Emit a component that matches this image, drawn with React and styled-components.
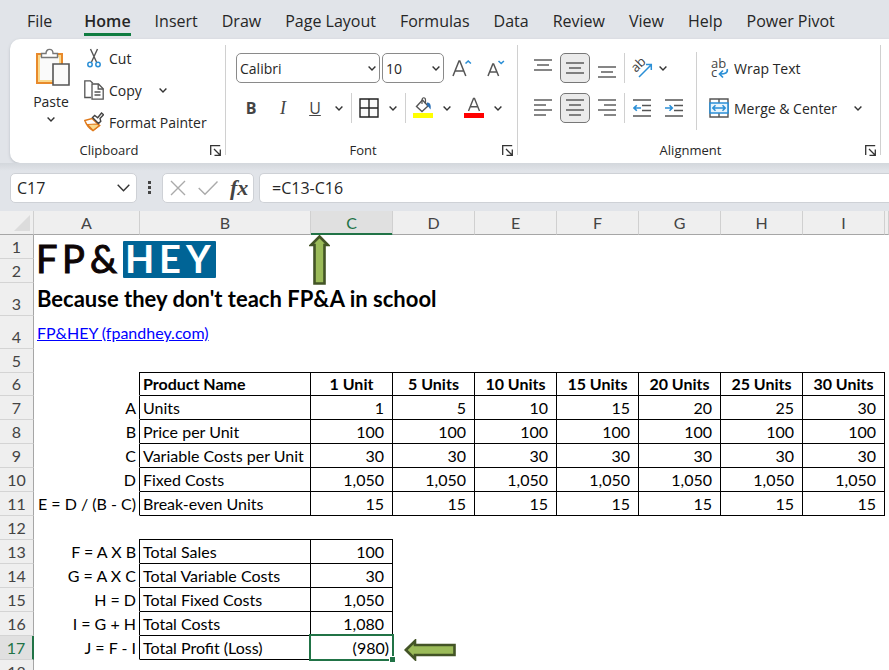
import React from 'react';
import styled, { createGlobalStyle, css } from 'styled-components';

const ui = '"Open Sans", "Noto Sans", sans-serif';
const sheet = 'Lato, "Open Sans", sans-serif';

const columns = ['A', 'B', 'C', 'D', 'E', 'F', 'G', 'H', 'I'];

const products = [
    { row: 7, key: 'A', name: 'Units', values: ['1', '5', '10', '15', '20', '25', '30'] },
    { row: 8, key: 'B', name: 'Price per Unit', values: Array(7).fill('100') },
    { row: 9, key: 'C', name: 'Variable Costs per Unit', values: Array(7).fill('30') },
    { row: 10, key: 'D', name: 'Fixed Costs', values: Array(7).fill('1,050') },
    { row: 11, key: 'E = D / (B - C)', name: 'Break-even Units', values: Array(7).fill('15') },
];

const totals = [
    { row: 13, key: 'F = A X B', name: 'Total Sales', value: '100' },
    { row: 14, key: 'G = A X C', name: 'Total Variable Costs', value: '30' },
    { row: 15, key: 'H = D', name: 'Total Fixed Costs', value: '1,050' },
    { row: 16, key: 'I = G + H', name: 'Total Costs', value: '1,080' },
    { row: 17, key: 'J = F - I', name: 'Total Profit (Loss)', value: '(980)', selected: true },
];

const unitHeads = ['1 Unit', '5 Units', '10 Units', '15 Units', '20 Units', '25 Units', '30 Units'];
const tabs = ['File', 'Home', 'Insert', 'Draw', 'Page Layout', 'Formulas', 'Data', 'Review', 'View', 'Help', 'Power Pivot'];

/* icons */

const Chevron = ({ size = 8 }) => (
    <svg width={size} height={size === 8 ? 5 : 8} viewBox={size === 8 ? '0 0 8 5' : '0 0 13 8'} fill="none" stroke="#333" strokeWidth="1.4">
        <path d={size === 8 ? 'M.6.6 4 4 7.4.6' : 'M.7.8 6.5 6.8 12.3.8'} />
    </svg>
);

const PasteIcon = () => (
    <svg width="40" height="40" viewBox="-4 0 40 40" fill="none">
        <path d="M2 6h25v29H2z" fill="#fad98d" stroke="#e8892b" strokeWidth="2" />
        <path d="M5 9h19v23H5z" fill="#fafafa" />
        <path d="M6.500 9.500V5.500h4.500c0-5.500 7-5.500 7 0h4.500v4z" fill="#fff" stroke="#777" strokeWidth="1.4" />
        <path d="M18 16h16v21H18z" fill="#fafafa" stroke="#555" strokeWidth="1.600" />
    </svg>
);

const CutIcon = () => (
    <svg width="20" height="20" viewBox="0 0 20 20" fill="none">
        <path d="M6.500 1 12.500 14M13.500 1 7.500 14" stroke="#555" strokeWidth="1.400" />
        <circle cx="6" cy="16.500" r="2.200" stroke="#2b8fd6" strokeWidth="1.500" />
        <circle cx="14" cy="16.500" r="2.200" stroke="#2b8fd6" strokeWidth="1.500" />
    </svg>
);

const CopyIcon = () => (
    <svg width="20" height="20" viewBox="0 0 20 20" fill="none" stroke="#555" strokeWidth="1.300">
        <path d="M7 17.500H.8V.8h5.500l2.500 2.500" />
        <path d="M8 4h6.500L19.200 8.700V19.200H8z" fill="#fff" />
        <path d="M14.200 4v5h5M10.500 12h6M10.500 15h6" />
    </svg>
);

const PainterIcon = () => (
    <svg width="20" height="20" viewBox="0 0 20 20" fill="none">
        <path d="M.8 8.500 8 6.500l7.500 7L9 18.500C5 16.500 2.500 13 .8 8.500z" fill="#fff" stroke="#e07a1b" strokeWidth="1.500" />
        <path d="M3.500 12.500 12.500 12l3 1.500L9 18.500z" fill="#fad98d" stroke="#e07a1b" strokeWidth="1.200" />
        <path d="m8.500 5.500 2.200-2 3 2.200L17.500 1l2 1.800L16 6.500l.8 2.700-2.300 2.300z" fill="#fff" stroke="#444" strokeWidth="1.400" />
    </svg>
);

const LauncherIcon = () => (
    <svg width="11" height="11" viewBox="0 0 11 11" fill="none" stroke="#333" strokeWidth="1.300">
        <path d="M.7 10V.7h9.500M4 4l6 6M10.300 4.500v5.800H4.500" />
    </svg>
);

const GrowIcon = () => (
    <svg width="20" height="18" viewBox="0 0 20 18" fill="none">
        <path d="M1 17 7 2h.8l6 15M3.200 12h8.600" stroke="#555" strokeWidth="1.500" />
        <path d="M13.500 4.500 16.200 2l2.700 2.500" stroke="#2b8fd6" strokeWidth="1.600" />
    </svg>
);

const ShrinkIcon = () => (
    <svg width="18" height="18" viewBox="0 0 18 18" fill="none">
        <path d="M1 17 5.800 5h.8l5 12M2.800 13h7" stroke="#555" strokeWidth="1.500" />
        <path d="M11.500 2 14.200 4.500 16.900 2" stroke="#2b8fd6" strokeWidth="1.600" />
    </svg>
);

const BordersIcon = () => (
    <svg width="20" height="20" viewBox="0 0 20 20" fill="#fafafa" stroke="#222" strokeWidth="1.400">
        <path d="M1 1h18v18H1zM10 1v18M1 10h18" />
    </svg>
);

const FillIcon = () => (
    <svg width="20" height="22" viewBox="0 0 20 22" fill="none">
        <path d="m3.500 9.500 6-6.500 5.500 6-6 5.500z" fill="#fff" stroke="#555" strokeWidth="1.400" />
        <path d="M9 7V3c0-3 3.500-3 3.500 0v4" stroke="#555" strokeWidth="1.200" />
        <path d="M14 5.500c3-.5 4.500 3 3.500 7-1.200-1.200-1.500-3-3.500-4z" fill="#2b6fb5" />
        <path d="M0 16h20v5H0z" fill="#ffff00" />
    </svg>
);

const FontColorIcon = () => (
    <svg width="20" height="22" viewBox="0 0 20 22" fill="none">
        <path d="M4.500 14 9.500 1.500h1l5 12.500M6.300 9.800h7.400" stroke="#555" strokeWidth="1.400" />
        <path d="M0 16h20v5H0z" fill="#ff0000" />
    </svg>
);

const LinesIcon = ({ lines, height = 18 }) => (
    <svg width="18" height={height} viewBox={`0 0 18 ${height}`} stroke="#444" strokeWidth="1.300">
        {lines.map(([x1, x2, y]) => <path key={y} d={`M${x1} ${y}H${x2}`} />)}
    </svg>
);

const OrientationIcon = () => (
    <svg width="22" height="20" viewBox="0 0 22 20" fill="none">
        <text transform="translate(5 15) rotate(-45)" fontSize="13" fill="#444">ab</text>
        <path d="M8 19 20 7M15 6.500h5.300V12" stroke="#2b8fd6" strokeWidth="1.500" />
    </svg>
);

const IndentIcon = ({ right }) => (
    <svg width="18" height="18" viewBox="0 0 18 18" fill="none">
        <path d="M0 1h18M9 6.500h9M9 11.500h9M0 17h18" stroke="#555" strokeWidth="1.300" />
        <path d={right ? 'M0 9h7M4.500 6.200 7.300 9l-2.800 2.800' : 'M1 9h7M3.800 6.200 1 9l2.800 2.800'} stroke="#2b8fd6" strokeWidth="1.600" />
    </svg>
);

const WrapIcon = () => (
    <svg width="20" height="24" viewBox="0 0 20 24" fill="none">
        <text x="2" y="12" fontSize="13" fill="#444">ab</text>
        <text x="2" y="21" fontSize="13" fill="#444">c</text>
        <path d="M18.200 13c.8 4-2 5-7 5M14 14.500 10.500 18l3.500 3.500" stroke="#2b8fd6" strokeWidth="1.700" />
    </svg>
);

const MergeIcon = () => (
    <svg width="20" height="20" viewBox="0 0 20 20" fill="none">
        <path d="M1 1h18v18H1zM10 1v4M10 15v4" stroke="#555" strokeWidth="1.400" />
        <path d="M1 5h18v10H1z" fill="#eaf5fc" stroke="#2b8fd6" strokeWidth="1.600" />
        <path d="M4 10h12M6.500 7.300 3.800 10l2.700 2.700M13.500 7.300l2.700 2.700-2.700 2.700" stroke="#2b8fd6" strokeWidth="1.500" />
    </svg>
);

const Logo = () => (
    <LogoSvg width="180" height="47" viewBox="0 -4 180 47" role="img" aria-label="FP&HEY">
        <rect x="86" y="1" width="93" height="37" rx="1" fill="#006496" />
        <text x="-1 25 53" y="33" fontSize="38" fill="#0d0606" stroke="#0d0606">FP&amp;</text>
        <text x="88 122 149" y="33" fontSize="38" fontWeight="700" fill="#fff">HEY</text>
    </LogoSvg>
);

const UpArrow = () => (
    <FloatingArrow $left={-2} $top={0} width="21" height="50" viewBox="0 0 21 50">
        <path d="M10.500 1.500 19 10h-3.500v38.500h-10V10H2z" fill="#9bbb59" stroke="#435426" strokeWidth="2.600" />
    </FloatingArrow>
);

const LeftArrow = () => (
    <FloatingArrow $left={11} $top={3} width="52" height="22" viewBox="0 0 52 22">
        <path d="M1.800 11 11 2v4h39.500v10H11v4z" fill="#9bbb59" stroke="#435426" strokeWidth="2.600" />
    </FloatingArrow>
);

/* ribbon */

const SplitButton = ({ label, children }) => (
    <Split>
        <IconButton aria-label={label} $wide>{children}</IconButton>
        <ArrowButton aria-label={`${label} options`}><Chevron /></ArrowButton>
    </Split>
);

function ClipboardGroup() {
    return (
        <Group $width={216}>
            <ClipboardBody>
                <PasteButton>
                    <PasteIcon />
                    Paste
                    <Chevron />
                </PasteButton>
                <CommandList>
                    <Command><CutIcon />Cut</Command>
                    <Split>
                        <Command><CopyIcon />Copy</Command>
                        <ArrowButton aria-label="Copy options"><Chevron /></ArrowButton>
                    </Split>
                    <Command><PainterIcon />Format Painter</Command>
                </CommandList>
            </ClipboardBody>
            <GroupFooter><span>Clipboard</span><Launcher aria-label="Clipboard settings"><LauncherIcon /></Launcher></GroupFooter>
        </Group>
    );
}

function FontGroup() {
    return (
        <Group $width={292}>
            <ToolRows>
                <ToolRow $combo>
                    <Combo $width={144}>
                        <select aria-label="Font" defaultValue="Calibri"><option>Calibri</option></select>
                        <Chevron />
                    </Combo>
                    <Combo $width={62}>
                        <select aria-label="Font size" defaultValue="10"><option>10</option></select>
                        <Chevron />
                    </Combo>
                    <IconButton aria-label="Increase font size" $wide><GrowIcon /></IconButton>
                    <IconButton aria-label="Decrease font size" $wide><ShrinkIcon /></IconButton>
                </ToolRow>
                <ToolRow>
                    <IconButton $wide aria-label="Bold"><Letter as="b">B</Letter></IconButton>
                    <IconButton $wide aria-label="Italic"><Letter $italic as="i">I</Letter></IconButton>
                    <SplitButton label="Underline"><Letter as="u">U</Letter></SplitButton>
                    <Divider />
                    <SplitButton label="Borders"><BordersIcon /></SplitButton>
                    <Divider />
                    <SplitButton label="Fill color"><FillIcon /></SplitButton>
                    <SplitButton label="Font color"><FontColorIcon /></SplitButton>
                </ToolRow>
            </ToolRows>
            <GroupFooter><span>Font</span><Launcher aria-label="Font settings"><LauncherIcon /></Launcher></GroupFooter>
        </Group>
    );
}

function AlignmentGroup() {
    return (
        <Group $width={363}>
            <AlignBody>
                <ToolRows>
                    <ToolRow $spaced>
                        <IconButton aria-label="Top align"><LinesIcon lines={[[0, 18, 1], [3, 15, 6], [0, 18, 11]]} /></IconButton>
                        <IconButton aria-label="Middle align" $active><LinesIcon lines={[[0, 18, 4], [3, 15, 9], [0, 18, 14]]} /></IconButton>
                        <IconButton aria-label="Bottom align"><LinesIcon lines={[[0, 18, 9], [3, 15, 14], [0, 18, 19]]} height={20} /></IconButton>
                        <Divider $flush />
                        <IconButton aria-label="Orientation"><OrientationIcon /></IconButton>
                        <ArrowButton aria-label="Orientation options" $narrow><Chevron /></ArrowButton>
                    </ToolRow>
                    <ToolRow $spaced>
                        <IconButton aria-label="Align left"><LinesIcon lines={[[0, 18, 1], [0, 12, 6], [0, 18, 11], [0, 12, 16]]} /></IconButton>
                        <IconButton aria-label="Center" $active><LinesIcon lines={[[0, 18, 1], [3, 15, 6], [0, 18, 11], [3, 15, 16]]} /></IconButton>
                        <IconButton aria-label="Align right"><LinesIcon lines={[[0, 18, 1], [6, 18, 6], [0, 18, 11], [6, 18, 16]]} /></IconButton>
                        <Divider $flush />
                        <IconButton aria-label="Decrease indent"><IndentIcon /></IconButton>
                        <IconButton aria-label="Increase indent"><IndentIcon right /></IconButton>
                    </ToolRow>
                </ToolRows>
                <WrapColumn>
                    <Command><WrapIcon />Wrap Text</Command>
                    <Split>
                        <Command><MergeIcon />Merge &amp; Center</Command>
                        <ArrowButton aria-label="Merge options"><Chevron /></ArrowButton>
                    </Split>
                </WrapColumn>
            </AlignBody>
            <GroupFooter><span>Alignment</span><Launcher aria-label="Alignment settings"><LauncherIcon /></Launcher></GroupFooter>
        </Group>
    );
}

function FormulaBar() {
    return (
        <Bar>
            <NameBox>
                <input aria-label="Name box" defaultValue="C17" />
                <Chevron size={13} />
            </NameBox>
            <svg width="4" height="16" viewBox="0 0 4 16" fill="#444">
                <path d="M0 1h3v3H0zM0 6h3v3H0zM0 11h3v3H0z" />
            </svg>
            <FormulaButtons>
                <button aria-label="Cancel">
                    <svg width="16" height="16" viewBox="0 0 16 16" stroke="#aaa" strokeWidth="1.400"><path d="M1 1l14 14M15 1 1 15" /></svg>
                </button>
                <button aria-label="Enter">
                    <svg width="20" height="16" viewBox="0 0 20 16" fill="none" stroke="#aaa" strokeWidth="1.400"><path d="M.7 8 7 14.300 19.500 1.500" /></svg>
                </button>
                <button aria-label="Insert function"><i>fx</i></button>
            </FormulaButtons>
            <FormulaInput aria-label="Formula" defaultValue="=C13-C16" />
        </Bar>
    );
}

/* worksheet */

function EmptyRow({ row }) {
    return (
        <Row $h={24}>
            <RowHead scope="row">{row}</RowHead>
            <Cell colSpan={10} />
        </Row>
    );
}

function Worksheet() {
    return (
        <Grid>
            <colgroup>
                <Col $w={34} />
                <Col $w={106} />
                <Col $w={171} />
                {unitHeads.map((u) => <Col key={u} $w={82} />)}
                <col />
            </colgroup>
            <thead>
                <tr>
                    <Corner><svg width="16" height="16" viewBox="0 0 16 16"><path d="M16 0v16H0z" fill="#dcdcdc" /></svg></Corner>
                    {columns.map((c) => <ColHead key={c} scope="col" $active={c === 'C'}>{c}</ColHead>)}
                    <ColHead />
                </tr>
            </thead>
            <tbody>
                <Row $h={24}>
                    <RowHead scope="row">1</RowHead>
                    <Cell colSpan={2} rowSpan={2}><Logo /></Cell>
                    <Cell><UpArrow /></Cell>
                    <Cell colSpan={7} />
                </Row>
                <Row $h={24}>
                    <RowHead scope="row">2</RowHead>
                    <Cell colSpan={8} />
                </Row>
                <Row $h={33}>
                    <RowHead scope="row" $low>3</RowHead>
                    <Cell colSpan={10}><Slogan>Because they don't teach FP&amp;A in school</Slogan></Cell>
                </Row>
                <Row $h={33}>
                    <RowHead scope="row" $low>4</RowHead>
                    <Cell colSpan={10}><SiteLink href="#site">FP&amp;HEY (fpandhey.com)</SiteLink></Cell>
                </Row>
                <EmptyRow row={5} />
                <Row $h={23}>
                    <RowHead scope="row">6</RowHead>
                    <Cell $edge $lead />
                    <Cell $edge $bold $top>Product Name</Cell>
                    {unitHeads.map((u) => <Cell key={u} $edge $bold $top $align="center">{u}</Cell>)}
                    <Cell />
                </Row>
                {products.map((p) => (
                    <Row key={p.row} $h={24}>
                        <RowHead scope="row">{p.row}</RowHead>
                        <Cell $edge $lead $align="right">{p.key}</Cell>
                        <Cell $edge>{p.name}</Cell>
                        {p.values.map((v, i) => <Cell key={unitHeads[i]} $edge $number>{v}</Cell>)}
                        <Cell />
                    </Row>
                ))}
                <EmptyRow row={12} />
                {totals.map((t, i) => (
                    <Row key={t.row} $h={24}>
                        <RowHead scope="row" $active={t.selected}>{t.row}</RowHead>
                        <Cell $edge $lead $align="right">{t.key}</Cell>
                        <Cell $edge $top={i === 0}>{t.name}</Cell>
                        <Cell $edge $top={i === 0} $number={!t.selected} $align="right">
                            {t.value}
                            {t.selected && <Selection />}
                        </Cell>
                        <Cell colSpan={7}>{t.selected && <LeftArrow />}</Cell>
                    </Row>
                ))}
                <EmptyRow row={18} />
            </tbody>
        </Grid>
    );
}

function App() {
    return (
        <Page>
            <GlobalStyle />
            <TabBar>
                {tabs.map((t) => <Tab key={t} $active={t === 'Home'}>{t}</Tab>)}
            </TabBar>
            <RibbonArea>
                <Ribbon>
                    <ClipboardGroup />
                    <FontGroup />
                    <AlignmentGroup />
                </Ribbon>
            </RibbonArea>
            <FormulaBar />
            <Worksheet />
        </Page>
    );
}

const GlobalStyle = createGlobalStyle`
    *{
        box-sizing: border-box;
    }
    body{
        margin: 0;
        overflow: hidden;
        background: #fff;
    }
    button, input, select{
        font: inherit;
        color: inherit;
        background: none;
        border: 0;
        padding: 0;
        margin: 0;
    }
    svg{
        display: block;
        flex-shrink: 0;
    }
`;

const Page = styled.main`
    height: 100vh;
    overflow: hidden;
    font-family: ${ui};
    font-size: 14px;
    color: #262626;
`;

const TabBar = styled.nav`
    display: flex;
    gap: 24px;
    height: 39px;
    padding: 6px 27px 0;
    background: #e1e4e9;
`;

const Tab = styled.button`
    height: 30px;
    padding-top: 2px;
    font-size: 16px;
    white-space: nowrap;
    border-bottom: 3px solid transparent;
    &:first-child{
        margin-right: 8px;
    }
    ${({ $active }) => $active && css`
        font-weight: 600;
        border-color: #107c41;
    `}
`;

const RibbonArea = styled.div`
    padding-left: 10px;
    background: #e1e4e9;
`;

const Ribbon = styled.section`
    display: flex;
    height: 124px;
    background: #fff;
    border-radius: 10px 0 0 10px;
    box-shadow: 0 1px 3px #b9bec4;
`;

const Group = styled.div`
    display: flex;
    flex-direction: column;
    flex: none;
    width: ${({ $width }) => $width}px;
    margin: 6px 0 8px;
    border-right: 1px solid #d0d0d0;
`;

const ClipboardBody = styled.div`
    display: flex;
    flex: 1;
    gap: 11px;
    padding-left: 19px;
`;

const PasteButton = styled.button`
    display: flex;
    flex-direction: column;
    align-items: center;
    align-self: flex-start;
    gap: 4px;
    width: 44px;
    padding-top: 3px;
    svg:last-child{
        margin-top: 2px;
    }
`;

const CommandList = styled.div`
    display: flex;
    flex-direction: column;
    align-items: flex-start;
    margin-top: -3px;
`;

const Command = styled.button`
    display: flex;
    align-items: center;
    gap: 5px;
    height: 32px;
    white-space: nowrap;
`;

const Split = styled.div`
    display: flex;
    align-items: center;
    margin-right: 3px;
    ${Command} + button{
        margin-left: 13px;
    }
`;

const ArrowButton = styled.button`
    display: grid;
    place-items: center;
    width: 16px;
    height: 30px;
    ${({ $narrow }) => $narrow && 'margin-left: -4px;'}
`;

const GroupFooter = styled.div`
    display: grid;
    grid-template-columns: 15px 1fr 15px;
    align-items: center;
    height: 18px;
    margin-bottom: -4px;
    font-size: 13px;
    text-align: center;
    span{
        grid-column: 2;
        padding-right: 17px;
    }
`;

const Launcher = styled.button`
    grid-column: 3;
`;

const ToolRows = styled.div`
    display: flex;
    flex-direction: column;
    flex: 1;
    gap: 10px;
    padding: 8px 0 0 9px;
`;

const ToolRow = styled.div`
    display: flex;
    align-items: center;
    height: 30px;
    ${({ $combo }) => $combo && 'gap: 2px; padding-left: 1px;'}
    ${({ $spaced }) => $spaced && 'gap: 2px;'}
`;

const Combo = styled.label`
    position: relative;
    width: ${({ $width }) => $width}px;
    height: 30px;
    border: 1px solid #8a8a8a;
    border-radius: 5px;
    select{
        width: 100%;
        height: 100%;
        padding-left: 3px;
        appearance: none;
    }
    svg{
        position: absolute;
        right: 3px;
        top: 12px;
        pointer-events: none;
    }
`;

const IconButton = styled.button`
    display: grid;
    place-items: center;
    width: ${({ $wide }) => ($wide ? 32 : 30)}px;
    height: 30px;
    border-radius: 5px;
    ${({ $active }) => $active && css`
        background: #ebebeb;
        border: 1px solid #777;
    `}
`;

const Letter = styled.span`
    font-size: 16px;
    color: #444;
    ${({ $italic }) => $italic && 'font-family: "Liberation Serif", serif; font-size: 18px;'}
`;

const Divider = styled.span`
    width: 1px;
    height: 30px;
    background: #d0d0d0;
    margin: ${({ $flush }) => ($flush ? '0' : '0 1px')};
`;

const AlignBody = styled.div`
    display: flex;
    flex: 1;
    ${ToolRows}{
        flex: none;
        width: 178px;
        padding-left: 10px;
    }
`;

const WrapColumn = styled.div`
    display: flex;
    flex-direction: column;
    gap: 8px;
    align-self: flex-start;
    margin-top: 7px;
    padding-left: 12px;
    border-left: 1px solid #d0d0d0;
    height: 78px;
`;

const Bar = styled.section`
    display: flex;
    align-items: center;
    height: 48px;
    padding: 2px 0 0 10px;
    background: linear-gradient(#d3d7dc, #e1e4e9 8px);
    font-size: 16px;
`;

const box = css`
    display: flex;
    align-items: center;
    height: 30px;
    background: #fff;
    border: 1px solid #ced1d6;
    border-radius: 5px;
`;

const NameBox = styled.label`
    ${box}
    width: 127px;
    margin-right: 11px;
    padding: 0 6px;
    input{
        flex: 1;
        width: 0;
    }
`;

const FormulaButtons = styled.div`
    ${box}
    gap: 12px;
    width: 92px;
    margin: 0 5px 0 10px;
    padding-left: 7px;
    i{
        font-family: "Liberation Serif", serif;
        font-size: 22px;
        line-height: 24px;
        font-weight: 700;
        color: #444;
    }
`;

const FormulaInput = styled.input`
    &&{
        ${box}
        flex: 1;
        min-width: 0;
        padding-left: 12px;
        border-right: 0;
        border-radius: 5px 0 0 5px;
    }
`;

const Grid = styled.table`
    width: 100%;
    table-layout: fixed;
    border-collapse: separate;
    border-spacing: 0;
    font-family: ${sheet};
    font-size: 16px;
    line-height: 20px;
    color: #000;
`;

const Col = styled.col`
    width: ${({ $w }) => $w}px;
`;

const Row = styled.tr`
    height: ${({ $h }) => $h}px;
`;

const ColHead = styled.th`
    height: 24px;
    padding: 0;
    font-weight: 400;
    color: #444;
    background: #efefef;
    border-right: 1px solid #d0d0d0;
    border-bottom: 1px solid #a6a6a6;
    ${({ $active }) => $active && css`
        color: #217346;
        background: #e0e0e0;
        border-bottom-color: #217346;
        box-shadow: inset 0 -1px 0 #217346;
    `}
`;

const Corner = styled(ColHead)`
    svg{
        margin-left: 14px;
    }
`;

const RowHead = styled.th`
    height: 23px;
    padding: ${({ $low }) => ($low ? '9px' : '0')} 0 0;
    font-weight: 400;
    color: #444;
    background: #efefef;
    border-right: 1px solid #a6a6a6;
    border-bottom: 1px solid #d4d4d4;
    ${({ $active }) => $active && css`
        color: #217346;
        background: #e0e0e0;
        border-right: 2px solid #217346;
    `}
`;

const Cell = styled.td`
    position: relative;
    height: 23px;
    padding: 0 ${({ $number }) => ($number ? 8 : 3)}px 0 3px;
    white-space: nowrap;
    text-align: ${({ $align, $number }) => $align || ($number ? 'right' : 'left')};
    font-weight: ${({ $bold }) => ($bold ? 700 : 400)};
    ${({ $edge, $lead }) => $edge && css`
        border-right: 1px solid #000;
        border-bottom: 1px solid ${$lead ? 'transparent' : '#000'};
    `}
    ${({ $top }) => $top && 'box-shadow: 0 -1px 0 #000, -1px -1px 0 #000;'}
`;

const Selection = styled.span`
    position: absolute;
    inset: -2px;
    border: 2px solid #217346;
    &::after{
        content: '';
        position: absolute;
        right: -3px;
        bottom: -3px;
        width: 5px;
        height: 5px;
        background: #217346;
        box-shadow: 0 0 0 1px #fff;
    }
`;

const LogoSvg = styled.svg`
    font-family: ${sheet};
`;

const FloatingArrow = styled.svg`
    position: absolute;
    left: ${({ $left }) => $left}px;
    top: ${({ $top }) => $top}px;
`;

const Slogan = styled.strong`
    font-size: 22px;
`;

const SiteLink = styled.a`
    color: #0000ff;
`;

export default App;
